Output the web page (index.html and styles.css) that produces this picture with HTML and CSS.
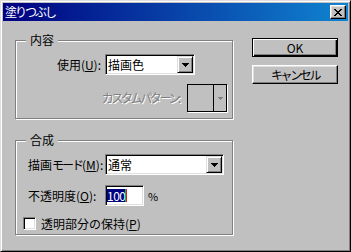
FILE: index.html
```html
<!DOCTYPE html>
<html>
<head>
    <meta charset="UTF-8">
    <title>塗りつぶし</title>
    <link rel="stylesheet" href="styles.css">
</head>
<body>
    <div class="window">
        <div class="titlebar">
            <span class="title">塗りつぶし</span>
            <span class="close-btn">
                <svg width="8" height="7" viewBox="0 0 8 7" shape-rendering="crispEdges">
                    <path d="M0 0h2v1H0zM6 0h2v1H6zM1 1h2v1H1zM5 1h2v1H5zM2 2h4v1H2zM3 3h2v1H3zM2 4h4v1H2zM1 5h2v1H1zM5 5h2v1H5zM0 6h2v1H0zM6 6h2v1H6z" fill="#000"/>
                </svg>
            </span>
        </div>

        <div class="content">
            <div class="groups">
                <div class="group group-fill">
                    <span class="group-title">内容</span>
                    <div class="row row-use">
                        <span class="label label-use">使用(<u>U</u>):</span>
                        <div class="select select-use">
                            <span class="select-value">描画色</span>
                            <span class="select-arrow">
                                <svg width="7" height="4" viewBox="0 0 7 4" shape-rendering="crispEdges"><path d="M0 0h7v1H0zM1 1h5v1H1zM2 2h3v1H2zM3 3h1v1H3z" fill="#000"/></svg>
                            </span>
                        </div>
                    </div>
                    <div class="row row-pattern">
                        <span class="label disabled kana">カスタムパターン:</span>
                        <div class="pattern">
                            <span class="pattern-swatch"></span>
                            <span class="pattern-arrow">
                                <svg width="5" height="3" viewBox="0 0 5 3" shape-rendering="crispEdges"><path d="M0 0h5v1H0zM1 1h3v1H1zM2 2h1v1H2z" fill="#808080"/></svg>
                            </span>
                        </div>
                    </div>
                </div>

                <div class="group group-blend">
                    <span class="group-title">合成</span>
                    <div class="row row-mode">
                        <span class="label label-blend">描画<span class="kana">モード</span>(<u>M</u>):</span>
                        <div class="select select-mode">
                            <span class="select-value">通常</span>
                            <span class="select-arrow">
                                <svg width="7" height="4" viewBox="0 0 7 4" shape-rendering="crispEdges"><path d="M0 0h7v1H0zM1 1h5v1H1zM2 2h3v1H2zM3 3h1v1H3z" fill="#000"/></svg>
                            </span>
                        </div>
                    </div>
                    <div class="row row-opacity">
                        <span class="label label-blend">不透明度(<u>O</u>):</span>
                        <div class="field">
                            <span class="selected">100</span><span class="caret"></span>
                        </div>
                        <span class="unit">%</span>
                    </div>
                    <div class="row row-check">
                        <span class="checkbox"></span>
                        <span class="label">透明部分の保持(<u>P</u>)</span>
                    </div>
                </div>
            </div>

            <div class="actions">
                <button class="btn btn-default">OK</button>
                <button class="btn"><span class="kana">キャンセル</span></button>
            </div>
        </div>
    </div>
</body>
</html>
```

FILE: styles.css
```css
* {
    box-sizing: border-box;
}
body {
    margin: 0;
    font-family: "Noto Sans CJK JP", "Liberation Sans", sans-serif;
    font-size: 12px;
    color: #000;
}
u {
    text-decoration: underline;
    text-underline-offset: 1px;
}
.window {
    width: 351px;
    height: 252px;
    background: #c0c0c0;
    border: 1px solid;
    border-color: #dfdfdf #000 #000 #dfdfdf;
    box-shadow: inset 1px 1px #fff, inset -1px -1px #808080;
    padding: 2px;
}
.titlebar {
    height: 18px;
    display: flex;
    align-items: center;
    justify-content: space-between;
    padding: 0 2px;
    background: linear-gradient(to right, #000080, #1084d0);
    color: #fff;
}
.title {
    line-height: 12px;
    letter-spacing: -2px;
}
.close-btn {
    width: 16px;
    height: 14px;
    display: flex;
    align-items: center;
    justify-content: center;
    background: #c0c0c0;
    border: 1px solid;
    border-color: #fff #000 #000 #fff;
    box-shadow: inset -1px -1px #808080, inset 1px 1px #dfdfdf;
}
.content {
    display: flex;
    padding: 19px 0 0 12px;
}

/* group boxes */
.group {
    width: 218px;
    border: 1px solid #808080;
    box-shadow: inset 1px 1px #fff, 1px 1px #fff;
}
.group-fill {
    height: 79px;
}
.group-blend {
    height: 95px;
    margin-top: 21px;
}
.group-title {
    display: block;
    width: fit-content;
    margin: -7px 0 0 10px;
    padding: 0 4px;
    line-height: 12px;
    background: #c0c0c0;
}
.row {
    display: flex;
    align-items: center;
    line-height: 14px;
}
.row-use {
    margin-top: 8px;
    height: 21px;
}
.label-use {
    width: 85px;
    margin-right: 4px;
    text-align: right;
}
.row-pattern {
    margin-top: 9px;
    height: 28px;
    justify-content: flex-end;
    padding-right: 5px;
}
.row-pattern .label {
    margin-right: 8px;
}
.kana {
    letter-spacing: -2.4px;
}
.disabled {
    color: #808080;
    text-shadow: 1px 1px #fff;
}
.row-mode {
    margin-top: 8px;
    height: 21px;
}
.row-opacity {
    margin-top: 10px;
    height: 21px;
}
.label-blend {
    width: 77px;
    margin-left: 12px;
}
.label-blend .kana {
    letter-spacing: -2px;
}
.row-check {
    margin-top: 11px;
    height: 13px;
    padding-left: 7px;
}

/* controls */
.select {
    display: flex;
    height: 21px;
    padding: 1px;
    background: #fff;
    border: 1px solid;
    border-color: #808080 #fff #fff #808080;
    box-shadow: inset 1px 1px #000, inset -1px -1px #dfdfdf;
}
.select-use {
    width: 90px;
}
.select-mode {
    width: 119px;
}
.select-value {
    flex: 1;
    padding-left: 1px;
    line-height: 17px;
}
.select-arrow {
    width: 16px;
    height: 17px;
    display: flex;
    align-items: center;
    justify-content: center;
    background: #c0c0c0;
    border: 1px solid;
    border-color: #dfdfdf #000 #000 #dfdfdf;
    box-shadow: inset 1px 1px #fff, inset -1px -1px #808080;
}
.pattern {
    width: 40px;
    height: 28px;
    display: flex;
    border: 1px solid #000;
    box-shadow: 1px 1px #fff;
}
.pattern-swatch {
    width: 26px;
    border-right: 1px solid #000;
}
.pattern-arrow {
    flex: 1;
    display: flex;
    align-items: center;
    justify-content: center;
}
.field {
    width: 39px;
    height: 21px;
    display: flex;
    align-items: center;
    padding-left: 1px;
    background: #fff;
    border: 1px solid;
    border-color: #808080 #fff #fff #808080;
    box-shadow: inset 1px 1px #000, inset -1px -1px #dfdfdf;
}
.selected {
    background: #000080;
    color: #fff;
    line-height: 13px;
    letter-spacing: -0.5px;
}
.caret {
    width: 2px;
    height: 13px;
    border-left: 1px solid #00c060;
    border-right: 1px solid #d02020;
}
.unit {
    margin-left: 4px;
    font-size: 11px;
}
.checkbox {
    width: 13px;
    height: 13px;
    margin-right: 5px;
    background: #fff;
    border: 1px solid;
    border-color: #808080 #fff #fff #808080;
    box-shadow: inset 1px 1px #000, inset -1px -1px #dfdfdf;
}

/* buttons */
.actions {
    display: flex;
    flex-direction: column;
    gap: 8px;
    margin: -2px 0 0 19px;
}
.btn {
    width: 86px;
    height: 19px;
    padding: 0;
    font: inherit;
    line-height: 14px;
    color: #000;
    background: #c0c0c0;
    border: 1px solid;
    border-color: #fff #000 #000 #fff;
    box-shadow: inset -1px -1px #808080, inset 1px 1px #dfdfdf;
}
.btn-default {
    border-color: #000;
    box-shadow: inset 1px 1px #fff, inset -1px -1px #000, inset -2px -2px #808080;
}
```
